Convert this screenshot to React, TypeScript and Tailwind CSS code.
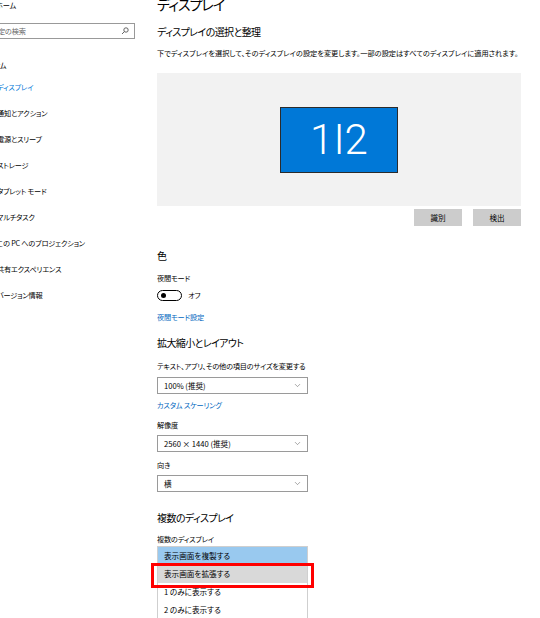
import { ChevronDown } from "lucide-react";

const navItems = [
  "ディスプレイ",
  "通知とアクション",
  "電源とスリープ",
  "ストレージ",
  "タブレット モード",
  "マルチタスク",
  "この PC へのプロジェクション",
  "共有エクスペリエンス",
  "バージョン情報",
];

const jp = "[font-family:'Noto_Sans_CJK_JP',sans-serif] [font-feature-settings:'palt']";

function Select({ value }: { value: string }) {
  return (
    <div className="flex h-[17px] w-[151px] items-center justify-between border border-[#9a9a9a] bg-white pl-[6px] pr-[5px] text-[7.6px] text-black">
      <span>{value}</span>
      <ChevronDown className="h-[9px] w-[9px] text-[#666]" strokeWidth={1.5} />
    </div>
  );
}

function Label({ children, className = "" }: { children: React.ReactNode; className?: string }) {
  return (
    <div className={`flex h-[12px] items-center whitespace-nowrap text-[7.2px] tracking-[-0.2px] text-black ${className}`}>
      {children}
    </div>
  );
}

function Heading({ children, className = "" }: { children: React.ReactNode; className?: string }) {
  return (
    <div className={`flex h-[18px] items-center text-[10px] tracking-[-0.6px] text-black ${className}`}>{children}</div>
  );
}

export default function App() {
  return (
    <div className={`flex h-[618px] w-[540px] overflow-hidden bg-white ${jp}`}>
      {/* sidebar, cut on the left */}
      <div className="w-[150px] shrink-0 overflow-hidden text-[7.2px] tracking-[-0.2px]">
        <div className="-mt-[1px] -ml-[4px] flex h-[12px] items-center text-black">ホーム</div>
        <div className="mt-[12px] flex h-[16px] w-[135px] items-center justify-between border border-[#999] border-l-0 pr-[5px]">
          <span className="-ml-[9px] text-[#666]">設定の検索</span>
          <svg width="8" height="8" viewBox="0 0 8 8" fill="none" stroke="#555" strokeWidth="0.9">
            <circle cx="5" cy="3" r="2.2" />
            <path d="M3.4 4.6 L1 7" />
          </svg>
        </div>
        <div className="mt-[20px] -ml-[19px] flex h-[12px] items-center text-black">システム</div>
        <div className="mt-[3px]">
          {navItems.map((item, i) => (
            <div
              key={item}
              className={`-ml-[3px] flex h-[26px] items-center whitespace-nowrap ${i === 0 ? "text-[#0078d7]" : "text-black"}`}
            >
              {item}
            </div>
          ))}
        </div>
      </div>

      {/* main */}
      <div className="min-w-0 flex-1 overflow-hidden pl-[7px] pr-[19px]">
        <div className="-mt-[6px] flex h-[20px] items-center text-[14px] tracking-[-1px] text-black">ディスプレイ</div>
        <Heading className="mt-[8px]">ディスプレイの選択と整理</Heading>
        <Label className="mt-[7px] tracking-[0px]">
          下でディスプレイを選択して、そのディスプレイの設定を変更します。一部の設定はすべてのディスプレイに適用されます。
        </Label>

        <div className="mt-[14px] flex h-[133px] items-center justify-center bg-[#f2f2f2]">
          <div className="flex h-[66px] w-[118px] items-center justify-center border border-[#2b2b2b] bg-[#0078d7]">
            <span className="[font-family:Roboto,sans-serif] text-[42px] font-light leading-none text-white">1I2</span>
          </div>
        </div>

        <div className="mt-[3px] flex justify-end gap-[11px]">
          <div className="flex h-[17px] w-[48px] items-center justify-center bg-[#cccccc] text-[7.6px] text-black">識別</div>
          <div className="flex h-[17px] w-[48px] items-center justify-center bg-[#cccccc] text-[7.6px] text-black">検出</div>
        </div>

        <Heading className="mt-[20px]">色</Heading>
        <Label className="mt-[8px]">夜間モード</Label>
        <div className="mt-[5px] flex h-[12px] items-center gap-[6px]">
          <div className="flex h-[11px] w-[25px] items-center rounded-full border-[1.5px] border-black pl-[3px]">
            <div className="h-[5px] w-[5px] rounded-full bg-black" />
          </div>
          <span className="text-[7.2px] text-black">オフ</span>
        </div>
        <Label className="mt-[10px] !text-[#0067c0]">夜間モード設定</Label>

        <Heading className="mt-[10px]">拡大縮小とレイアウト</Heading>
        <Label className="mt-[9px]">テキスト、アプリ、その他の項目のサイズを変更する</Label>
        <div className="mt-[5px]">
          <Select value="100% (推奨)" />
        </div>
        <Label className="mt-[5px] !text-[#0067c0]">カスタム スケーリング</Label>
        <Label className="mt-[8px]">解像度</Label>
        <div className="mt-[4px]">
          <Select value="2560 × 1440 (推奨)" />
        </div>
        <Label className="mt-[7px]">向き</Label>
        <div className="mt-[4px]">
          <Select value="横" />
        </div>

        <Heading className="mt-[16px]">複数のディスプレイ</Heading>
        <Label className="mt-[7px]">複数のディスプレイ</Label>
        <div className="relative mt-[1px] w-[151px] border-x border-t border-[#cfcfcf] text-[7.6px] text-black">
          <div className="flex h-[18px] items-center bg-[#99c9ef] pl-[6px]">表示画面を複製する</div>
          <div className="flex h-[18px] items-center bg-[#d9d9d9] pl-[6px]">表示画面を拡張する</div>
          <div className="flex h-[18px] items-center pl-[6px]">1 のみに表示する</div>
          <div className="flex h-[18px] items-center pl-[6px]">2 のみに表示する</div>
          <div className="absolute -left-[7px] top-[16px] h-[25px] w-[163px] border-[3px] border-[#ff0000]" />
        </div>
      </div>
    </div>
  );
}
